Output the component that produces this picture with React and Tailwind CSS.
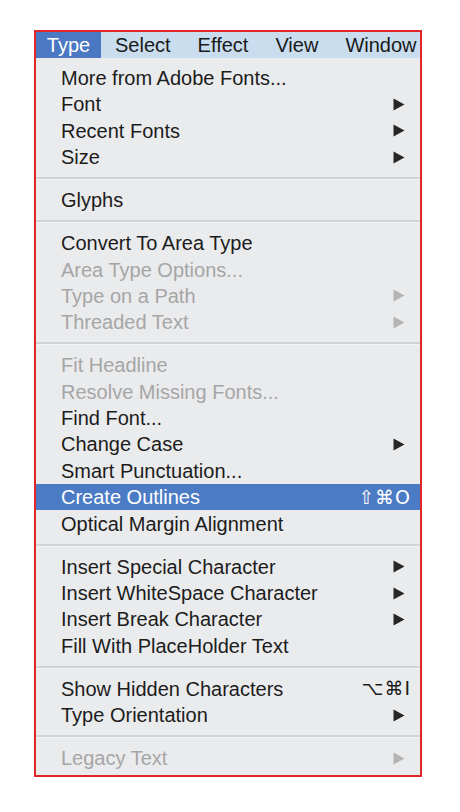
import React from 'react';

const menuBar = ['Select', 'Effect', 'View', 'Window'];

// groups of rows, separated by a line
const groups = [
  [
    { label: 'More from Adobe Fonts...' },
    { label: 'Font', sub: true },
    { label: 'Recent Fonts', sub: true },
    { label: 'Size', sub: true },
  ],
  [{ label: 'Glyphs' }],
  [
    { label: 'Convert To Area Type' },
    { label: 'Area Type Options...', off: true },
    { label: 'Type on a Path', sub: true, off: true },
    { label: 'Threaded Text', sub: true, off: true },
  ],
  [
    { label: 'Fit Headline', off: true },
    { label: 'Resolve Missing Fonts...', off: true },
    { label: 'Find Font...' },
    { label: 'Change Case', sub: true },
    { label: 'Smart Punctuation...' },
    { label: 'Create Outlines', keys: '⇧⌘O', active: true },
    { label: 'Optical Margin Alignment' },
  ],
  [
    { label: 'Insert Special Character', sub: true },
    { label: 'Insert WhiteSpace Character', sub: true },
    { label: 'Insert Break Character', sub: true },
    { label: 'Fill With PlaceHolder Text' },
  ],
  [
    { label: 'Show Hidden Characters', keys: '⌥⌘I' },
    { label: 'Type Orientation', sub: true },
  ],
  [{ label: 'Legacy Text', sub: true, off: true }],
];

const Arrow = ({ off }) => (
  <svg width="12" height="13" viewBox="0 0 12 13" className={off ? 'text-[#b4b4b4]' : 'text-[#262626]'}>
    <polygon points="0.5,0.5 11.5,6.5 0.5,12.5" fill="currentColor" />
  </svg>
);

const Row = ({ item }) => {
  let color = 'text-[#1c1c1c]';
  if (item.off) color = 'text-[#a6a6a6]';
  if (item.active) color = 'text-white';

  return (
    <div className={`h-[26.4px] flex items-center pl-[25px] ${item.keys ? 'pr-[9px]' : 'pr-[15px]'} ${item.active ? 'bg-[#4c7bc5]' : ''} ${color}`}>
      <span className="flex-1 whitespace-nowrap">{item.label}</span>
      {item.sub && <Arrow off={item.off} />}
      {item.keys && (
        <span className="text-[19px] tracking-[1px]" style={{ fontFamily: '"DejaVu Sans", sans-serif' }}>
          {item.keys}
        </span>
      )}
    </div>
  );
};

const Separator = () => (
  <div className="h-[16.6px] flex flex-col justify-center">
    <div className="h-[2px] bg-[#d2d3d5]" />
    <div className="h-[1px] bg-[#f3f4f5]" />
  </div>
);

const App = () => {
  return (
    <div className="min-h-screen bg-white pt-[30px] pl-[34px]" style={{ fontFamily: '"Liberation Sans", Arial, sans-serif' }}>
      <div className="w-[388px] border-2 border-[#e2252b] bg-[#eaebed] text-[20px] leading-none">
        <div className="h-[26px] flex items-stretch bg-[#c9ddef] text-[#1a1a1a]">
          <div className="w-[65px] flex items-center justify-center bg-[#4a78c2] text-white">Type</div>
          <div className="flex items-center gap-[27px] ml-[14px]">
            {menuBar.map((m) => (
              <span key={m}>{m}</span>
            ))}
          </div>
        </div>
        <div className="pt-[6.8px] pb-[3.4px]">
          {groups.map((g, i) => (
            <React.Fragment key={i}>
              {i > 0 && <Separator />}
              {g.map((item) => (
                <Row key={item.label} item={item} />
              ))}
            </React.Fragment>
          ))}
        </div>
      </div>
    </div>
  );
};

export default App;
